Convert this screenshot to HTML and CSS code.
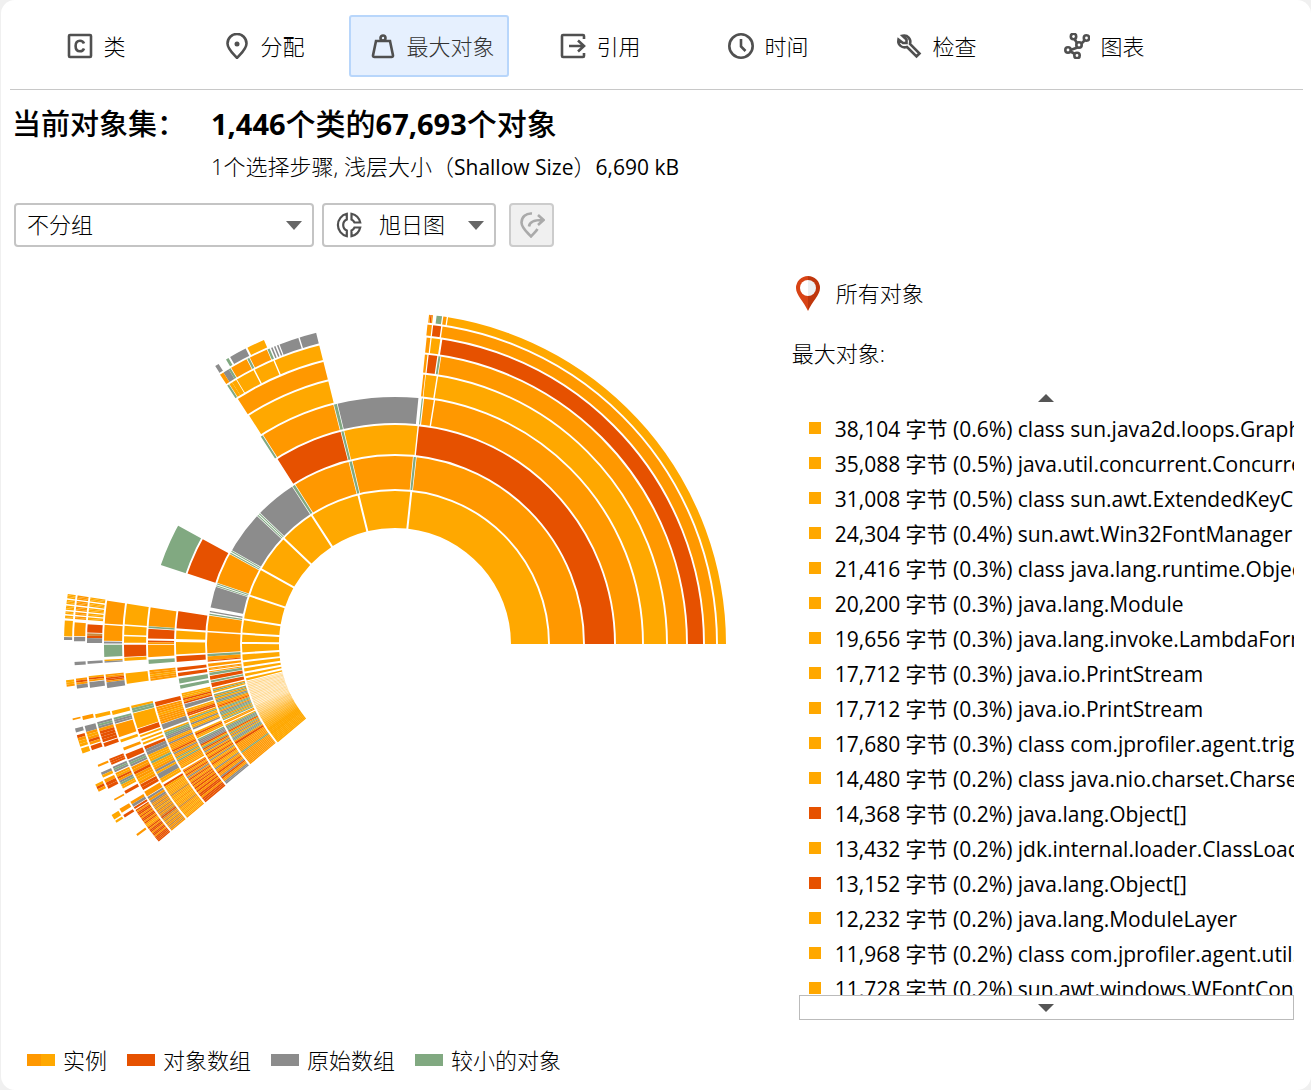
FILE: index.html
```html
<!DOCTYPE html>
<html lang="zh-CN">

<head>
    <meta charset="UTF-8">
    <meta name="viewport" content="width=device-width, initial-scale=1.0">
    <title>最大对象</title>
    <link rel="stylesheet" href="styles.css">
</head>

<body>
    <div class="window">
        <nav class="tabs">
            <button class="tab" type="button">
                <svg class="icon" viewBox="0 0 26 26"><rect x="2" y="2" width="22" height="22" rx="1" /><path d="M17 10.5C16.3 8.6 14.9 7.7 13 7.7C10.3 7.7 8.6 9.8 8.6 13S10.3 18.3 13 18.3C14.9 18.3 16.3 17.4 17 15.5" /></svg>
                <span>类</span>
            </button>
            <button class="tab" type="button">
                <svg class="icon" viewBox="0 0 26 26"><path d="M13 25C9 20.5 3.5 16 3.5 10.5A9.5 9.5 0 0 1 22.5 10.5C22.5 16 17 20.5 13 25Z" /><circle class="solid" cx="13" cy="11" r="2.5" /></svg>
                <span>分配</span>
            </button>
            <button class="tab tab_current" type="button">
                <svg class="icon" viewBox="0 0 26 26"><path d="M6 8H20L23 22.5Q23 24 21.5 24H4.5Q3 24 3 22.5Z" /><circle cx="13" cy="5" r="2.5" /></svg>
                <span>最大对象</span>
            </button>
            <button class="tab" type="button">
                <svg class="icon" viewBox="0 0 26 26"><path d="M24 6V3Q24 2 23 2H3Q2 2 2 3V23Q2 24 3 24H23Q24 24 24 23V20M9 13H24M18 7.5L24 13L18 18.5" /></svg>
                <span>引用</span>
            </button>
            <button class="tab" type="button">
                <svg class="icon" viewBox="0 0 26 26"><circle cx="13" cy="13" r="11.7" /><path d="M13 6V13.5L17.5 18" /></svg>
                <span>时间</span>
            </button>
            <button class="tab" type="button">
                <svg class="icon" viewBox="0 0 26 26"><path d="M6.5 2.7L10.5 6.5V10H7L2.5 6.5C1.5 12 6 15.5 11 14L20.5 23.5L23.5 20.5L14 11C15.5 6 11.5 1.5 6.5 2.7Z" /></svg>
                <span>检查</span>
            </button>
            <button class="tab" type="button">
                <svg class="icon" viewBox="0 0 26 26"><path d="M10.5 6L13 10M17 11L20.5 7.5M13.5 14.5L6.5 17M6.500 18.5L11 21" /><circle cx="9.5" cy="3.5" r="2.7" /><circle cx="22.5" cy="5" r="2.7" /><circle cx="15" cy="12" r="2.7" /><circle cx="4" cy="17" r="2.7" /><circle cx="13" cy="22.5" r="2.7" /></svg>
                <span>图表</span>
            </button>
        </nav>

        <header class="summary">
            <h1 class="summary_label">当前对象集：</h1>
            <div>
                <h2 class="summary_title"><b>1,446</b>个类的<b>67,693</b>个对象</h2>
                <p class="summary_sub">1个选择步骤, 浅层大小（<span>Shallow Size</span>）<span>6,690 kB</span></p>
            </div>
        </header>

        <div class="toolbar">
            <div class="picker picker_group">
                <select aria-label="分组">
                    <option>不分组</option>
                </select>
                <svg class="picker_arrow" viewBox="0 0 16 9"><path d="M0 0H16L8 9Z" /></svg>
            </div>
            <div class="picker picker_chart">
                <svg class="icon picker_icon" viewBox="0 0 26 26"><path d="M10.8 1.8A11.5 11.5 0 0 0 10.8 24.2V18.5A6 6 0 0 1 10.8 7.5ZM15.5 1.8A11.5 11.5 0 0 1 24.200 10.5H18.5A6 6 0 0 0 15.5 7.5ZM24.2 15.5A11.5 11.5 0 0 1 15.5 24.2V18.5A6 6 0 0 0 18.5 15.5Z" /></svg>
                <select aria-label="图表类型">
                    <option>旭日图</option>
                </select>
                <svg class="picker_arrow" viewBox="0 0 16 9"><path d="M0 0H16L8 9Z" /></svg>
            </div>
            <button class="tool" type="button" aria-label="显示选择" disabled>
                <svg class="icon" viewBox="0 0 26 26"><path d="M13 1.5C7 1 2.5 5 2.5 10.5C2.5 16 8.5 20.5 12 24.5C14.5 21.5 17 19.5 18.5 17M10 14.5C10.5 10 14 8 23 8M19 3L24.5 8L19 13" /></svg>
            </button>
        </div>

        <main class="main">
            <div class="chart">
                <svg id="sunburst" viewBox="0 0 662 662" role="img" aria-label="旭日图"></svg>
            </div>
            <aside class="side">
                <div class="root">
                    <svg class="pin" viewBox="0 0 24 35"><path fill="#d84315" d="M12 0A12 12 0 0 0 0 12C0 19 8 26 12 35Z" /><path fill="#bf360c" d="M12 0A12 12 0 0 1 24 12C24 19 16 26 12 35Z" /><path fill="#fff" d="M12 4A8 8 0 0 0 12 20Z" /><path fill="#eceff1" d="M12 4A8 8 0 0 1 12 20Z" /></svg>
                    <span>所有对象</span>
                </div>
                <p class="side_title">最大对象:</p>
                <div class="scroller">
                    <button class="scroll_btn scroll_up" type="button" aria-label="向上滚动"><svg viewBox="0 0 16 8"><path d="M0 8H16L8 0Z" /></svg></button>
                    <ul class="objects">
                        <li>38,104 字节 (0.6%) class sun.java2d.loops.Graph</li>
                        <li>35,088 字节 (0.5%) java.util.concurrent.Concurre</li>
                        <li>31,008 字节 (0.5%) class sun.awt.ExtendedKeyCo</li>
                        <li>24,304 字节 (0.4%) sun.awt.Win32FontManager</li>
                        <li>21,416 字节 (0.3%) class java.lang.runtime.Objec</li>
                        <li>20,200 字节 (0.3%) java.lang.Module</li>
                        <li>19,656 字节 (0.3%) java.lang.invoke.LambdaForm</li>
                        <li>17,712 字节 (0.3%) java.io.PrintStream</li>
                        <li>17,712 字节 (0.3%) java.io.PrintStream</li>
                        <li>17,680 字节 (0.3%) class com.jprofiler.agent.trig</li>
                        <li>14,480 字节 (0.2%) class java.nio.charset.Charset</li>
                        <li class="array">14,368 字节 (0.2%) java.lang.Object[]</li>
                        <li>13,432 字节 (0.2%) jdk.internal.loader.ClassLoad</li>
                        <li class="array">13,152 字节 (0.2%) java.lang.Object[]</li>
                        <li>12,232 字节 (0.2%) java.lang.ModuleLayer</li>
                        <li>11,968 字节 (0.2%) class com.jprofiler.agent.util.</li>
                        <li>11,728 字节 (0.2%) sun.awt.windows.WFontConf</li>
                    </ul>
                    <button class="scroll_btn scroll_down" type="button" aria-label="向下滚动"><svg viewBox="0 0 16 8"><path d="M0 0H16L8 8Z" /></svg></button>
                </div>
            </aside>
        </main>

        <ul class="legend">
            <li class="instance">实例</li>
            <li class="object_array">对象数组</li>
            <li class="primitive">原始数组</li>
            <li class="small">较小的对象</li>
        </ul>
    </div>
    <script src="chart.js"></script>
</body>

</html>
```
FILE: styles.css
```css
* {
    margin: 0;
    padding: 0;
    box-sizing: border-box;
}

body {
    background-color: #f0f0f0;
    font-family: "Open Sans", "Noto Sans CJK SC", sans-serif;
    font-size: 21px;
    color: #000;
}

button,
select {
    font: inherit;
    color: inherit;
}

li {
    list-style: none;
}

.window {
    display: flex;
    flex-direction: column;
    height: 100vh;
    margin-left: 1px;
    background-color: #fff;
    border-radius: 14px;
    overflow: hidden;
}

.icon {
    flex: none;
    width: 26px;
    height: 26px;
    fill: none;
    stroke: #505050;
    stroke-width: 2.6;
}

.icon .solid {
    fill: #505050;
    stroke: none;
}

.tabs {
    display: flex;
    gap: 8px;
    margin: 0 8px 0 9px;
    padding: 15px 0 12px 3px;
    border-bottom: 1px solid #c8c8c8;
}

.tab {
    display: flex;
    align-items: center;
    justify-content: center;
    gap: 10px;
    width: 160px;
    height: 62px;
    padding-left: 7px;
    border: 2px solid transparent;
    border-radius: 3px;
    background: none;
    font-size: 22px;
    font-weight: 300;
}

.tab span {
    padding-bottom: 3px;
}

.tab_current {
    border-color: #b8d6fb;
    background-color: #e6f0fe;
    color: #333;
}

.summary {
    display: grid;
    grid-template-columns: 199px 1fr;
    padding: 13px 11px 0;
}

.summary h1,
.summary h2 {
    font-size: 29px;
    line-height: 42px;
    font-weight: 500;
    white-space: nowrap;
}

.summary h2 {
    font-size: 30px;
}

.summary b {
    font-size: 29px;
    font-weight: 700;
}

.summary_sub {
    font-size: 22px;
    line-height: 42px;
    font-weight: 300;
}

.summary_sub span {
    font-size: 21px;
    font-weight: 400;
}

.toolbar {
    display: flex;
    padding: 15px 13px 0;
}

.picker {
    position: relative;
    height: 44px;
    margin-right: 8px;
}

.picker_group {
    width: 300px;
}

.picker_chart {
    width: 174px;
    margin-right: 13px;
}

.picker select {
    appearance: none;
    width: 100%;
    height: 100%;
    padding: 0 0 2px 11px;
    border: 2px solid #c4c4c4;
    border-radius: 4px;
    background-color: #fff;
    font-size: 22px;
    font-weight: 300;
}

.picker_chart select {
    padding-left: 55px;
}

.picker_icon {
    position: absolute;
    left: 14px;
    top: 9px;
    stroke-width: 2.2;
}

.picker_arrow {
    position: absolute;
    right: 12px;
    top: 18px;
    width: 16px;
    height: 9px;
    fill: #666;
}

.tool {
    display: flex;
    align-items: center;
    justify-content: center;
    width: 45px;
    height: 44px;
    border: 2px solid #ccc;
    border-radius: 4px;
    background-color: #f0f0f0;
}

.tool .icon {
    stroke: #aaa;
}

.main {
    display: flex;
    flex: 1;
    min-height: 0;
}

.chart {
    flex: 789;
    padding: 66px 14px 0;
}

.chart svg {
    display: block;
    width: 100%;
    max-width: 662px;
    margin: 0 auto;
}

.chart .ring {
    fill: none;
    stroke: #fff;
    stroke-width: 1.9;
}

.side {
    display: flex;
    flex-direction: column;
    flex: 521;
    min-width: 0;
    padding: 28px 17px 0 2px;
}

.root {
    display: flex;
    align-items: center;
    gap: 16px;
    padding-left: 4px;
    font-size: 22px;
    font-weight: 300;
    line-height: 36px;
}

.pin {
    width: 24px;
    height: 35px;
}

.side_title {
    margin-top: 24px;
    font-size: 22px;
    font-weight: 300;
    line-height: 36px;
}

.scroller {
    display: flex;
    flex-direction: column;
    flex: 1;
    min-height: 0;
    margin: 14px 0 0 7px;
}

.scroll_btn {
    display: flex;
    flex: none;
    align-items: center;
    justify-content: center;
    height: 25px;
    border: 1px solid #bbb;
    background: none;
}

.scroll_btn svg {
    width: 16px;
    height: 8px;
    fill: #555;
}

.scroll_up {
    border-color: transparent;
}

.objects {
    flex: 1;
    min-height: 0;
    padding-left: 10px;
    overflow: hidden;
}

.objects li {
    display: flex;
    align-items: center;
    gap: 14px;
    height: 35px;
    white-space: nowrap;
}

.objects li::before {
    content: "";
    flex: none;
    width: 12px;
    height: 12px;
    background-color: #ffa800;
}

.objects .array::before {
    background-color: #e65100;
}

.legend {
    display: flex;
    gap: 20px;
    padding: 22px 26px 12px;
    font-size: 22px;
    font-weight: 300;
    line-height: 36px;
}

.legend li {
    display: flex;
    align-items: center;
    gap: 8px;
}

.legend li::before {
    content: "";
    width: 28px;
    height: 12px;
}

.legend .instance::before {
    background: linear-gradient(to right, #ff9800 50%, #ffa800 50%);
}

.legend .object_array::before {
    background-color: #e65100;
}

.legend .primitive::before {
    background-color: #8c8c8c;
}

.legend .small::before {
    background-color: #81a981;
}
```
FILE: chart.js
```js
var radii = [116, 154, 189, 220, 248, 272, 292, 309, 322, 331];
var colors = { y: '#ffa800', o: '#ff9800', r: '#e65100', g: '#8c8c8c', s: '#81a981', b: '#c98a3c' };
var svg = document.querySelector('#sunburst');
var center = 331;

// ring, start angle, end angle, colors of the equal slices in between ('.' is empty)
var data = [
    [0, 0, 83.9, 'y'], [0, 83.9, 103.8, 'y'], [0, 103.8, 122.9, 'y'], [0, 122.9, 136.5, 'y'],
    [0, 136.5, 150.8, 'y'], [0, 150.8, 161.6, 'y'], [0, 161.6, 170.7, 'y'], [0, 170.7, 176.1, 'y'],
    [0, 176.1, 179.6, 'y'], [0, 179.6, 183.5, 'y'], [0, 183.5, 186.5, 'y'], [0, 186.5, 188.8, 'y'],
    [0, 188.8, 190.8, 'y'], [0, 190.8, 192.6, 'y'], [0, 192.6, 194.2, 'y'],

    [1, 0, 83.6, 'o'], [1, 83.6, 84.3, 's'], [1, 84.3, 103.3, 'o'], [1, 103.3, 104.1, 's'],
    [1, 104.1, 122.2, 'o'], [1, 122.2, 123, 's'], [1, 123, 136, 'g'], [1, 136, 137, 's.s'],
    [1, 137, 150.3, 'g'], [1, 150.3, 151.3, 's.s'], [1, 151.3, 161.2, 'o'], [1, 161.2, 162.1, 's.s'],
    [1, 162.1, 169, 'g'], [1, 169, 171.1, '..g.s'], [1, 171.1, 176.2, 'o'], [1, 176.2, 183, 'o'],
    [1, 183, 183.8, 's'], [1, 183.8, 185, 'o'], [1, 185, 185.8, 'r.'], [1, 185.8, 187.1, 'o'],
    [1, 187.3, 188.7, 'oo.o'], [1, 188.8, 189.6, 's'], [1, 189.6, 191.2, 'r'], [1, 191.2, 191.8, 's'],
    [1, 191.8, 193.5, 'r'], [1, 193.7, 199.2, 'osy.sosygsoo'], [1, 199.2, 204, 'rossogssosys'],
    [1, 204.3, 211.5, 'oo.ysgssrosogysgso'], [1, 211.5, 212.2, 'r'], [1, 212.2, 219.7, 'oooooosooooooooo'],

    [2, 0, 83.9, 'r'], [2, 83.9, 103.6, 'y'], [2, 103.6, 104.2, 's'], [2, 104.2, 122.6, 'r'],
    [2, 151.2, 161.4, 'r'], [2, 171.2, 176.1, 'r'], [2, 176.3, 178.9, 'y'], [2, 179.3, 182.9, 'y'],
    [2, 183, 184.9, 'r'], [2, 186, 187.3, 'r'], [2, 187.4, 188.7, 'r'], [2, 188.9, 190.6, 's'],
    [2, 190.7, 192, 's'], [2, 193, 195.8, 'yyyror'], [2, 195.8, 197.2, 'g'], [2, 197.3, 199.2, 'yorr'],
    [2, 199.4, 203, 'ysyygyyg'], [2, 203.3, 205.5, '.yroy'], [2, 205.7, 209.8, 'sgggrysrog'],
    [2, 209.8, 215, 'yryorygyoroyyg'], [2, 215, 219.7, 'ooroogroogg'],

    [3, 0, 80.8, 'o'], [3, 80.8, 83.4, 'o'], [3, 83.5, 84.3, 's..'], [3, 84.4, 103.6, 'g'],
    [3, 103.6, 104.3, 's'], [3, 104.3, 122.4, 'o'], [3, 122.4, 122.9, 's'], [3, 151.2, 161.5, 's'],
    [3, 171.3, 176, 'o'], [3, 175.9, 176.3, 's'], [3, 176.3, 178.9, 'r'], [3, 179.2, 180, 'ro'],
    [3, 180, 183.2, 'o'], [3, 183.5, 184.8, 's'], [3, 186.1, 188.6, 'ooyoo'], [3, 193.4, 194.8, 'r'],
    [3, 194.8, 198.9, 'oooyoooo'], [3, 199, 200.2, 'g'], [3, 200.6, 204, 'yssggyog'],
    [3, 204, 210.3, 'oooorogoosysoooyo'], [3, 210.7, 215.2, 'oroorogorooror'], [3, 215.2, 219.9, 'orororrorrr'],

    [4, 0, 81, 'y'], [4, 81, 83.6, 'y'], [4, 83.6, 84, 'o'], [4, 104.1, 122.7, 'y'],
    [4, 171.3, 176, 'y'], [4, 176, 178.2, 'y'], [4, 178.2, 179.9, 'y'], [4, 180, 182.9, 'r'],
    [4, 182.9, 183.6, 'y'], [4, 186.1, 188.6, 'y'], [4, 193.2, 194.7, 'yss'], [4, 194.7, 198.3, 'y'],
    [4, 198.3, 199.4, 'r'], [4, 199.7, 202.2, 'y.y.y.'], [4, 202.2, 204.2, 'rgg'],
    [4, 204.2, 208.7, 'yyysyyogy'], [4, 208.7, 209.8, 'g'], [4, 209.8, 211.3, 'yy.'],
    [4, 211.3, 212.2, 'ry'], [4, 212.2, 219.9, 'yoyyoybyoyyoyyoyboyoyyoyyo'],

    [5, 0, 81, 'o'], [5, 81, 81.4, 's'], [5, 81.5, 83.5, 'r'], [5, 83.6, 84.1, 'o'],
    [5, 104.1, 122.8, 'o'], [5, 171.3, 176.1, 'o'], [5, 176.1, 179.5, 'o'], [5, 179.5, 179.9, 'g'],
    [5, 180, 182.7, 's'], [5, 183.1, 183.7, 'yg'], [5, 186, 187.6, 'oorro'], [5, 187.6, 188.7, 'g'],
    [5, 193.3, 194.1, 'y'], [5, 194.7, 195.9, 'sgg'], [5, 195.9, 198.8, 'o'], [5, 199.2, 202, 'y..o.'],
    [5, 202.1, 203.5, 'r'], [5, 203.6, 204.9, 'gsg'], [5, 205, 208.8, 'oorooyo'], [5, 208.9, 210.1, 'rr'],
    [5, 210.5, 211.6, 'o'], [5, 211.7, 213.1, 'gog'], [5, 213.1, 219.9, 'bobobybobobrbobybobobo'],

    [6, 0, 81.3, 'r'], [6, 81.4, 83.3, 'y'], [6, 83.4, 84.1, 'o'], [6, 104.1, 113.1, 'y'],
    [6, 113.1, 117.2, 'y'], [6, 117.2, 121, 'y'], [6, 121, 121.9, 'y'], [6, 121.9, 122.5, 'y'],
    [6, 122.6, 123, 's'], [6, 171.3, 175.8, 'yyy.yyy.yyy.yy.yy.'], [6, 176.2, 178, 'r'], [6, 178, 178.9, 'br'],
    [6, 178.9, 179.8, 'g'], [6, 183.2, 183.7, 'g'], [6, 186, 187, 'yro'], [6, 187, 188.3, 'g'],
    [6, 193.2, 193.9, 'y'], [6, 194.7, 195.9, 'gsg'], [6, 195.9, 198.6, 'orrrr'], [6, 198.8, 199.5, 'r'],
    [6, 201.9, 203.1, 'rrr'], [6, 203.5, 204.6, 'gsg'], [6, 204.8, 208, 'oyrogsyy'], [6, 208.5, 209.1, 'r'],
    [6, 210.8, 211.9, 'og'], [6, 212, 212.4, 'r'], [6, 212.6, 216.6, 'rorrororroroyo'], [6, 216.6, 219.9, 'rorrorrorrrr'],

    [7, 0, 81.6, 'o'], [7, 81.6, 83.3, 'r'], [7, 83.4, 84.2, 'o'], [7, 104.1, 107.4, 'g'],
    [7, 107.4, 111.2, 'g'], [7, 111.3, 113, 'g.g.g.'], [7, 113, 113.4, 's'], [7, 113.4, 117, 'o'],
    [7, 117, 117.4, 's'], [7, 117.4, 120.8, 'o'], [7, 120.8, 121.2, 's'], [7, 121.2, 122.3, 'g'],
    [7, 122.3, 123, 'o'], [7, 171.3, 175.8, 'ooo.ooo.ooo.oo.oo.'], [7, 176, 178.7, 'o'], [7, 178.7, 179.5, 'g'],
    [7, 183.2, 183.8, 'g'], [7, 186.2, 187.3, 'oro'], [7, 187.3, 188, 'g'], [7, 193, 193.7, 'o'],
    [7, 194.8, 195.9, 'g'], [7, 195.9, 198.3, 'oyoro'], [7, 198.5, 199.3, 'r'], [7, 202.1, 202.5, 'o'],
    [7, 203.6, 204.6, 'gy'], [7, 205, 206.8, 'orr'], [7, 208.9, 209.2, 'o'], [7, 210.9, 211.7, 'o'],
    [7, 212.2, 212.7, 'r'], [7, 216.3, 216.7, 'o'],

    [8, 0, 80.9, 'y'], [8, 81, 81.6, 'o'], [8, 81.7, 82.9, 's'], [8, 83.4, 84.1, 'oro'],
    [8, 113.2, 116.6, 'y'], [8, 116.7, 120, 'g'], [8, 120.2, 120.7, 's'], [8, 122.2, 122.9, 'g'],
    [8, 171.3, 175.8, 'yyy.yyy.yyy.yy.yy.'], [8, 175.8, 178.8, 'y'], [8, 178.8, 179.3, 'g'], [8, 186.3, 187.4, 'yyo'],
    [8, 193, 193.3, 'o'], [8, 194.8, 195.5, 'g'], [8, 196, 198.1, 'royy'], [8, 198.4, 199.3, 'y'],
    [8, 205.1, 206.5, 'yro'], [8, 211.1, 212, 'y'], [8, 212.3, 212.7, 'y']
];

// many tiny slices at the end of the first ring, fading in to solid
for (var a = 194.2; a < 219.6; a += 0.6) {
    var fade = a < 203 ? 0.1 : Math.min(1, 0.1 + (a - 203) / 12);
    data.push([0, a, a + 0.62, 'y', fade]);
    data.push([0, a, a + 0.3, 'y', Math.max(fade, 0.45)]);
}

function point(r, angle) {
    var rad = angle * Math.PI / 180;
    return (center + r * Math.cos(rad)).toFixed(2) + ' ' + (center - r * Math.sin(rad)).toFixed(2);
}

function add(name, attrs) {
    var el = document.createElementNS('http://www.w3.org/2000/svg', name);
    for (var key in attrs) {
        el.setAttribute(key, attrs[key]);
    }
    svg.appendChild(el);
}

function slice(ring, from, to, color, gap, opacity) {
    var r1 = radii[ring], r2 = radii[ring + 1];
    // same gap in pixels at the inner and the outer edge
    var g1 = gap / r1 * 180 / Math.PI, g2 = gap / r2 * 180 / Math.PI;
    var f = from ? 1 : 0;
    add('path', {
        d: 'M' + point(r1, from + g1 * f) + 'A' + r1 + ' ' + r1 + ' 0 0 0 ' + point(r1, to - g1) +
            'L' + point(r2, to - g2) + 'A' + r2 + ' ' + r2 + ' 0 0 1 ' + point(r2, from + g2 * f) + 'Z',
        fill: color,
        opacity: opacity
    });
}

data.forEach(function (item) {
    var list = item[3];
    var step = (item[2] - item[1]) / list.length;
    // only the first ring has wide gaps everywhere
    var gap = list.length == 1 && item[2] - item[1] > 1.2 ? (item[0] ? 0.7 : 1) : 0;
    for (var i = 0; i < list.length; i++) {
        if (list[i] != '.') {
            slice(item[0], item[1] + step * i, item[1] + step * (i + 1), colors[list[i]], gap, item[4] || 1);
        }
    }
});

for (var i = 1; i < radii.length - 1; i++) {
    add('circle', { 'class': 'ring', cx: center, cy: center, r: radii[i] });
}
```
